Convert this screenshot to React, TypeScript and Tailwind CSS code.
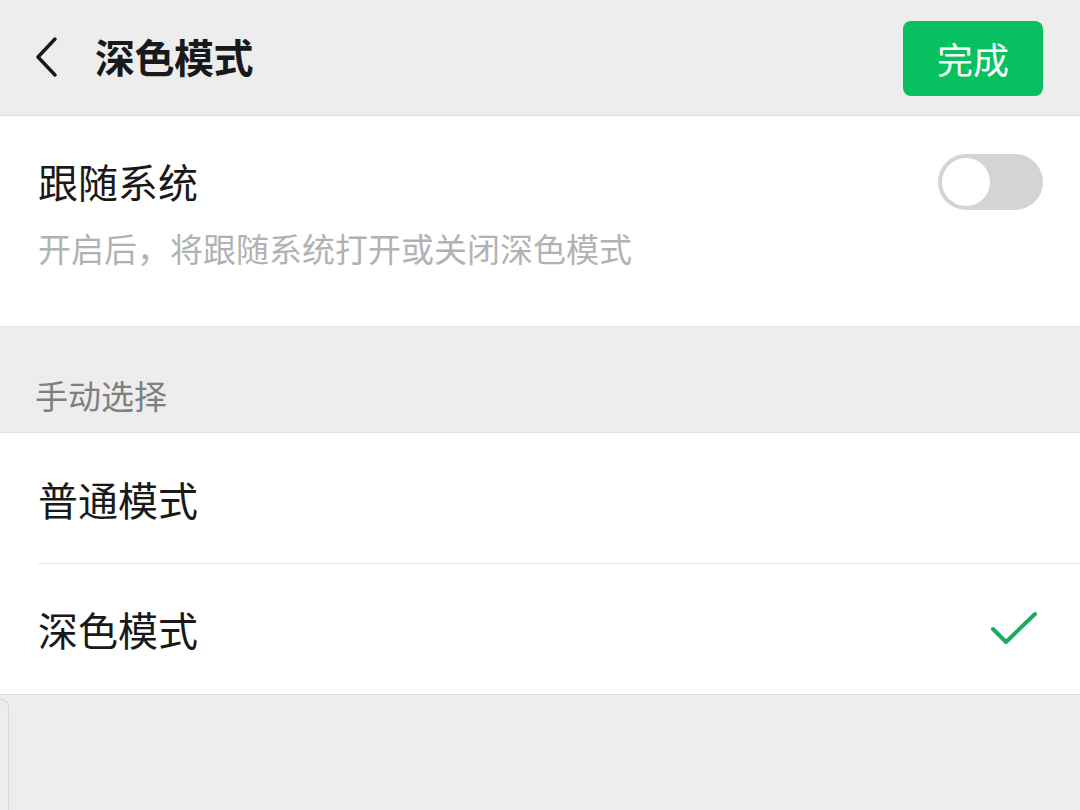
import React from "react";

const font = { fontFamily: '"Noto Sans CJK SC", "Noto Sans", sans-serif' };

const Check = () => (
  <svg width="48" height="40" viewBox="0 0 48 40" fill="none">
    <path d="M3 20 L16 33 L45 5" stroke="#1aad5f" strokeWidth="4" strokeLinecap="round" strokeLinejoin="round" />
  </svg>
);

export default function App() {
  return (
    <div className="w-[1080px] h-[810px] bg-[#ededed] flex flex-col overflow-hidden text-[#191919]" style={font}>
      <div className="h-[116px] shrink-0 flex items-center pl-[33px] pr-[37px] border-b border-[#d9d9d9]">
        <svg width="28" height="42" viewBox="0 0 28 42" fill="none" className="mt-[-2px]">
          <path d="M22 3 L5 21 L22 39" stroke="#191919" strokeWidth="3.5" strokeLinecap="round" strokeLinejoin="round" />
        </svg>
        <div className="ml-[34px] text-[40px] font-bold leading-none tracking-[-0.5px] mt-[-4px]">深色模式</div>
        <button className="ml-auto w-[140px] h-[75px] mt-[1px] rounded-[8px] bg-[#07c160] text-white text-[36px] leading-none flex items-center justify-center">
          完成
        </button>
      </div>

      <div className="bg-white h-[211px] shrink-0 pl-[38px] pr-[37px] pt-[36px] border-b border-[#e5e5e5]">
        <div className="flex items-center justify-between">
          <div className="text-[40px] leading-none">跟随系统</div>
          <div className="w-[105px] h-[56px] rounded-full bg-[#d4d4d4] p-[4px] flex items-center mt-[2px]">
            <div className="w-[48px] h-[48px] rounded-full bg-white" />
          </div>
        </div>
        <div className="mt-[22px] text-[33px] leading-none text-[#b2b2b2]">开启后，将跟随系统打开或关闭深色模式</div>
      </div>

      <div className="h-[106px] shrink-0 flex items-end pl-[35px] pb-[20px] border-b border-[#e0e0e0]">
        <div className="text-[33px] leading-none text-[#7f7f7f]">手动选择</div>
      </div>

      <div className="bg-white shrink-0 border-b border-[#e0e0e0]">
        <div className="h-[130px] flex items-center pl-[38px] text-[40px] leading-none">
          <span className="mt-[1px]">普通模式</span>
        </div>
        <div className="ml-[38px] border-t border-[#e5e5e5]" />
        <div className="h-[130px] flex items-center justify-between pl-[38px] pr-[42px] text-[40px] leading-none">
          <span>深色模式</span>
          <Check />
        </div>
      </div>

      <div className="flex-1 pt-[4px]">
        <div className="w-[9px] h-full rounded-tr-[8px] border-t border-r border-[#d6d6d6]" />
      </div>
    </div>
  );
}
